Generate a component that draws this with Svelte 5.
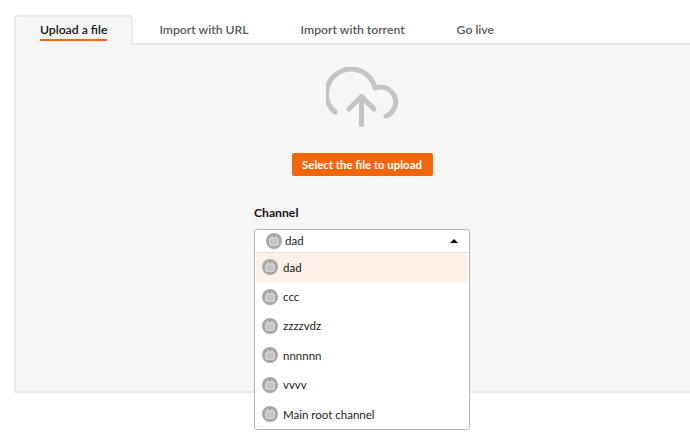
<script>
  const tabs = ['Upload a file', 'Import with URL', 'Import with torrent', 'Go live'];
  const channels = ['dad', 'ccc', 'zzzzvdz', 'nnnnnn', 'vvvv', 'Main root channel'];
</script>

{#snippet avatar()}
  <svg class="avatar" viewBox="0 0 16 16" width="16" height="16">
    <circle cx="8" cy="8" r="8" fill="#a8a8a8" />
    <path d="M5.4 3.2 7 5.2M10.6 3.2 9 5.2" stroke="#ddd" stroke-width="1.1" fill="none" />
    <rect x="3.8" y="5.2" width="8.4" height="7" rx="1.2" fill="#c4c4c4" stroke="#ddd" stroke-width="1.1" />
  </svg>
{/snippet}

<div class="page">
  <nav class="tabs">
    {#each tabs as tab, i}
      <div class="tab" class:active={i === 0}><span>{tab}</span></div>
    {/each}
    <div class="rest"></div>
  </nav>

  <section class="panel">
    <svg class="cloud" viewBox="0 0 72 60" width="72" height="60">
      <g fill="none" stroke="#c4c4c4" stroke-width="5" stroke-linecap="round" stroke-linejoin="round">
        <path d="M9 45A24.5 24.5 0 1 1 49 21A14.8 14.8 0 0 1 60 49" />
        <path d="M35.5 57.5V30M23 42L35.5 29.5L48 42" />
      </g>
    </svg>

    <button class="upload">Select the file to upload</button>

    <div class="field">
      <div class="label">Channel</div>
      <div class="select">
        <div class="current">
          {@render avatar()}
          <span>dad</span>
          <i class="caret"></i>
        </div>
        <ul>
          {#each channels as channel, i}
            <li class:selected={i === 0}>
              {@render avatar()}
              <span>{channel}</span>
            </li>
          {/each}
        </ul>
      </div>
    </div>
  </section>
</div>

<style>
  :global(body) {
    background: #fff;
    overflow: hidden;
  }

  .page {
    width: 690px;
    height: 447px;
    padding: 15px 0 0 14px;
    box-sizing: border-box;
    font-family: Lato, sans-serif;
    font-size: 12.2px;
    color: #111;
    overflow: hidden;
  }

  .tabs {
    display: flex;
    height: 30px;
    position: relative;
    z-index: 1;
  }

  .tab {
    padding: 7px 26px 0;
    color: #585858;
    font-weight: 600;
    border-bottom: 2px solid #e9e9e9;
  }

  .tab span {
    display: block;
    height: 17px;
    line-height: 16px;
  }

  .tab.active {
    background: #f6f6f6;
    border: 2px solid #e9e9e9;
    border-bottom: 0;
    border-radius: 4px 4px 0 0;
    padding: 5px 24px 0;
    color: #111;
  }

  .tab.active span {
    border-bottom: 2px solid #f2670b;
  }

  .rest {
    flex: 1;
    border-bottom: 2px solid #e9e9e9;
  }

  .panel {
    height: 348px;
    box-sizing: border-box;
    margin-right: -20px;
    background: #f6f6f6;
    border: 2px solid #e9e9e9;
    border-top: 0;
    display: flex;
    flex-direction: column;
    align-items: center;
  }

  .cloud {
    flex: none;
    margin: 22px 0 0 0;
  }

  .upload {
    flex: none;
    margin: 26px 0 0 0;
    width: 141px;
    height: 23px;
    padding: 0;
    border: 0;
    border-radius: 2px;
    background: #f2670b;
    color: #fff;
    font: 700 11.4px Lato, sans-serif;
  }

  .field {
    flex: none;
    margin: 29px 0 0 0;
    width: 216px;
  }

  .label {
    font-weight: 700;
    line-height: 16px;
    margin-bottom: 8px;
  }

  .select {
    background: #fff;
    border: 1px solid #b8b8b8;
    border-radius: 3px;
    width: 216px;
    box-sizing: border-box;
    font-size: 11.5px;
  }

  .current {
    display: flex;
    align-items: center;
    gap: 3px;
    height: 22px;
    padding: 0 11px 0 11px;
    border-bottom: 1px solid #e3e3e3;
    color: #222;
  }

  .current span {
    flex: 1;
    margin-bottom: 1px;
  }

  .caret {
    width: 0;
    height: 0;
    border: 4px solid transparent;
    border-top: 0;
    border-bottom: 4px solid #000;
  }

  ul {
    list-style: none;
    margin: 0;
    padding: 0 1px;
  }

  li {
    display: flex;
    align-items: center;
    gap: 5px;
    height: 29.4px;
    padding: 0 6px 1px;
    box-sizing: border-box;
    color: #222;
  }

  li.selected {
    background: #fdf1ea;
    color: #111;
  }

  .avatar {
    flex: none;
  }
</style>
